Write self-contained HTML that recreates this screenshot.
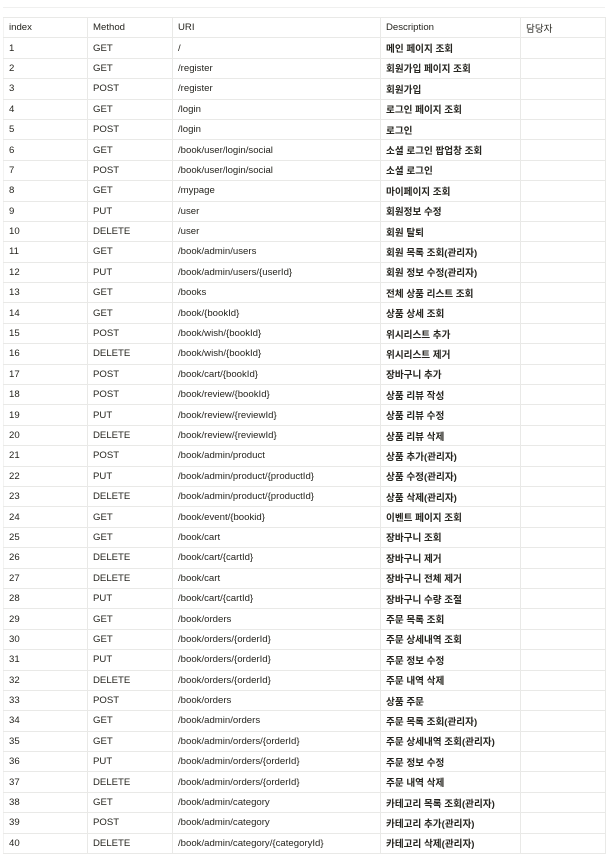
<!DOCTYPE html><html><head><meta charset="utf-8"><style>
body{margin:0;background:#fff;width:612px;height:861px;overflow:hidden;font-family:"Liberation Sans","Noto Sans CJK KR",sans-serif;font-size:9.6px;color:#26251f}
.top{position:absolute;left:3px;top:7px;width:602px;border-top:1px solid #f0f0ef}
table{position:absolute;left:3px;top:17px;border-collapse:collapse;table-layout:fixed;width:602px}
td{border:1px solid #e9e9e7;height:19.4px;padding:0 0 0 5px;white-space:nowrap;overflow:hidden}
td:first-child{border-left:1px solid #f3f3f2}
td:nth-child(4){font-weight:bold}
tr:first-child td{font-weight:normal}
</style></head><body><div class="top"></div>
<table><colgroup><col style="width:84px"><col style="width:85px"><col style="width:208px"><col style="width:140px"><col style="width:85px"></colgroup>
<tr><td>index</td><td>Method</td><td>URI</td><td>Description</td><td>담당자</td></tr>
<tr><td>1</td><td>GET</td><td>/</td><td>메인 페이지 조회</td><td></td></tr>
<tr><td>2</td><td>GET</td><td>/register</td><td>회원가입 페이지 조회</td><td></td></tr>
<tr><td>3</td><td>POST</td><td>/register</td><td>회원가입</td><td></td></tr>
<tr><td>4</td><td>GET</td><td>/login</td><td>로그인 페이지 조회</td><td></td></tr>
<tr><td>5</td><td>POST</td><td>/login</td><td>로그인</td><td></td></tr>
<tr><td>6</td><td>GET</td><td>/book/user/login/social</td><td>소셜 로그인 팝업창 조회</td><td></td></tr>
<tr><td>7</td><td>POST</td><td>/book/user/login/social</td><td>소셜 로그인</td><td></td></tr>
<tr><td>8</td><td>GET</td><td>/mypage</td><td>마이페이지 조회</td><td></td></tr>
<tr><td>9</td><td>PUT</td><td>/user</td><td>회원정보 수정</td><td></td></tr>
<tr><td>10</td><td>DELETE</td><td>/user</td><td>회원 탈퇴</td><td></td></tr>
<tr><td>11</td><td>GET</td><td>/book/admin/users</td><td>회원 목록 조회(관리자)</td><td></td></tr>
<tr><td>12</td><td>PUT</td><td>/book/admin/users/{userId}</td><td>회원 정보 수정(관리자)</td><td></td></tr>
<tr><td>13</td><td>GET</td><td>/books</td><td>전체 상품 리스트 조회</td><td></td></tr>
<tr><td>14</td><td>GET</td><td>/book/{bookId}</td><td>상품 상세 조회</td><td></td></tr>
<tr><td>15</td><td>POST</td><td>/book/wish/{bookId}</td><td>위시리스트 추가</td><td></td></tr>
<tr><td>16</td><td>DELETE</td><td>/book/wish/{bookId}</td><td>위시리스트 제거</td><td></td></tr>
<tr><td>17</td><td>POST</td><td>/book/cart/{bookId}</td><td>장바구니 추가</td><td></td></tr>
<tr><td>18</td><td>POST</td><td>/book/review/{bookId}</td><td>상품 리뷰 작성</td><td></td></tr>
<tr><td>19</td><td>PUT</td><td>/book/review/{reviewId}</td><td>상품 리뷰 수정</td><td></td></tr>
<tr><td>20</td><td>DELETE</td><td>/book/review/{reviewId}</td><td>상품 리뷰 삭제</td><td></td></tr>
<tr><td>21</td><td>POST</td><td>/book/admin/product</td><td>상품 추가(관리자)</td><td></td></tr>
<tr><td>22</td><td>PUT</td><td>/book/admin/product/{productId}</td><td>상품 수정(관리자)</td><td></td></tr>
<tr><td>23</td><td>DELETE</td><td>/book/admin/product/{productId}</td><td>상품 삭제(관리자)</td><td></td></tr>
<tr><td>24</td><td>GET</td><td>/book/event/{bookid}</td><td>이벤트 페이지 조회</td><td></td></tr>
<tr><td>25</td><td>GET</td><td>/book/cart</td><td>장바구니 조회</td><td></td></tr>
<tr><td>26</td><td>DELETE</td><td>/book/cart/{cartId}</td><td>장바구니 제거</td><td></td></tr>
<tr><td>27</td><td>DELETE</td><td>/book/cart</td><td>장바구니 전체 제거</td><td></td></tr>
<tr><td>28</td><td>PUT</td><td>/book/cart/{cartId}</td><td>장바구니 수량 조절</td><td></td></tr>
<tr><td>29</td><td>GET</td><td>/book/orders</td><td>주문 목록 조회</td><td></td></tr>
<tr><td>30</td><td>GET</td><td>/book/orders/{orderId}</td><td>주문 상세내역 조회</td><td></td></tr>
<tr><td>31</td><td>PUT</td><td>/book/orders/{orderId}</td><td>주문 정보 수정</td><td></td></tr>
<tr><td>32</td><td>DELETE</td><td>/book/orders/{orderId}</td><td>주문 내역 삭제</td><td></td></tr>
<tr><td>33</td><td>POST</td><td>/book/orders</td><td>상품 주문</td><td></td></tr>
<tr><td>34</td><td>GET</td><td>/book/admin/orders</td><td>주문 목록 조회(관리자)</td><td></td></tr>
<tr><td>35</td><td>GET</td><td>/book/admin/orders/{orderId}</td><td>주문 상세내역 조회(관리자)</td><td></td></tr>
<tr><td>36</td><td>PUT</td><td>/book/admin/orders/{orderId}</td><td>주문 정보 수정</td><td></td></tr>
<tr><td>37</td><td>DELETE</td><td>/book/admin/orders/{orderId}</td><td>주문 내역 삭제</td><td></td></tr>
<tr><td>38</td><td>GET</td><td>/book/admin/category</td><td>카테고리 목록 조회(관리자)</td><td></td></tr>
<tr><td>39</td><td>POST</td><td>/book/admin/category</td><td>카테고리 추가(관리자)</td><td></td></tr>
<tr><td>40</td><td>DELETE</td><td>/book/admin/category/{categoryId}</td><td>카테고리 삭제(관리자)</td><td></td></tr>
</table></body></html>
